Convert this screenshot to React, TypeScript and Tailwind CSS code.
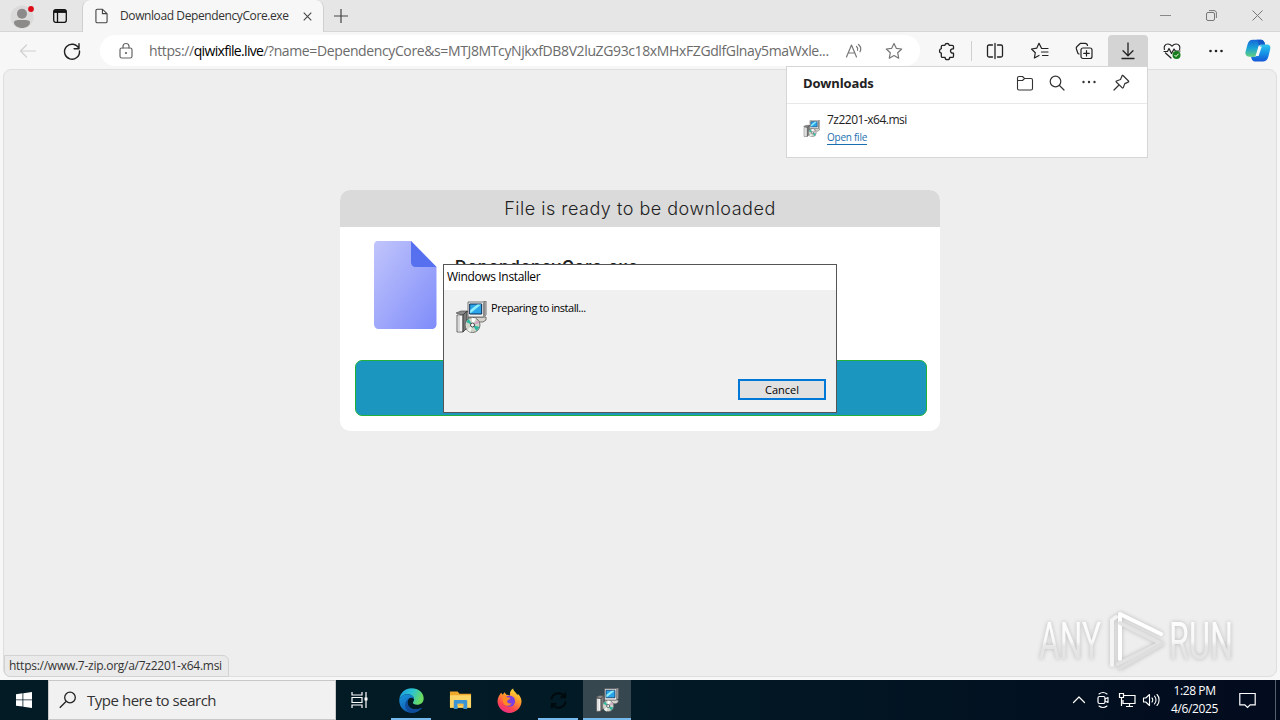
import type { ReactNode } from 'react';
import clsx from 'clsx';

type IconProps = { className?: string };

function Line({ className, children, size = 20 }: { className?: string; children: ReactNode; size?: number }) {
  return (
    <svg
      viewBox={`0 0 ${size} ${size}`}
      width={size}
      height={size}
      fill="none"
      stroke="currentColor"
      strokeWidth="1.2"
      strokeLinecap="round"
      strokeLinejoin="round"
      className={clsx('shrink-0', className)}
    >
      {children}
    </svg>
  );
}

const STAR = 'M10 2.4l2.3 4.9 5.4.7-4 3.8 1 5.4-4.7-2.7-4.7 2.7 1-5.4-4-3.8 5.4-.7z';

/* Windows Installer package: box, monitor and disc */
function InstallerIcon({ className }: IconProps) {
  return (
    <svg viewBox="0 0 32 32" className={clsx('shrink-0', className)}>
      <path d="M1 12l5-2h7l-3 4H7z" fill="#8a8a8a" stroke="#444" strokeWidth=".6" />
      <path d="M2 14h6v17H2z" fill="#f4f4f4" stroke="#444" strokeWidth=".8" />
      <path d="M4 14v17" stroke="#c4c4c4" strokeWidth="1.2" />
      <path d="M8 14l4-4v17l-4 4z" fill="#7a7a7a" stroke="#333" strokeWidth=".8" />
      <path d="M13 16h18v3l-3 2H13z" fill="#d6d3ce" stroke="#555" strokeWidth=".8" />
      <path d="M13 1h15l3-1v14l-3 2H13z" fill="#f1f1f1" stroke="#555" strokeWidth=".8" />
      <path d="M28 1.5l2.5-1v13.5L28 16z" fill="#8c8c8c" />
      <path d="M14.7 3h12v10h-12z" fill="#2aa5ea" stroke="#0b2a52" />
      <path d="M15.2 12.5V9l7-5.5h4z" fill="#8eeefc" />
      <circle cx="17.500" cy="24" r="7.500" fill="#cfd3c8" stroke="#555" strokeWidth=".8" />
      <path d="M17.500 24l-6.500-3 2.700-3zM17.500 24l7 2-3 4z" fill="#2fb6a0" />
      <path d="M17.500 24l-1-7.200 4.500.6z" fill="#fff" />
      <path d="M17.500 24l-2 7.200-3.500-2.200z" fill="#eef5f0" />
      <path d="M17.500 24l5.300-5 1.800 3z" fill="#cda7c0" />
      <circle cx="17.500" cy="24" r="2" fill="#fff" stroke="#333" strokeWidth=".9" />
    </svg>
  );
}

function CopilotIcon() {
  return (
    <svg viewBox="0 0 26 24" width="26" height="24">
      <defs>
        <linearGradient id="cpA" x1="0" y1="0" x2="0" y2="1">
          <stop offset="0" stopColor="#1767d8" />
          <stop offset=".5" stopColor="#19a4d8" />
          <stop offset="1" stopColor="#64cf7c" />
        </linearGradient>
        <linearGradient id="cpB" x1="0" y1="0" x2="0" y2="1">
          <stop offset="0" stopColor="#2ec7ee" />
          <stop offset=".5" stopColor="#1593e6" />
          <stop offset="1" stopColor="#1557d6" />
        </linearGradient>
      </defs>
      <path d="M17 5.500h5c3 0 3.900 2.200 3.100 5l-1.700 7c-.8 2.700-2.200 5-4.900 5H10c-2 0-3.500-1.500-4-5h4c1.500 0 2-.8 2.500-2.300l2-7c.5-1.700 1-2.700 2.500-2.700z" fill="url(#cpB)" />
      <path d="M9.500 17.700h-5c-3 0-4.800-2.200-3.900-5.100l1.900-7C3.300 2.800 5 .8 7.700.8H16c2 0 3.500 1.500 4 4.700h-4c-1.700 0-2.300 1-2.800 2.600l-2 7c-.4 1.500-.7 2.600-1.700 2.600z" fill="url(#cpA)" />
      <path d="M11.500.8H16c2 0 3.500 1.500 4 4.700h-3.500c-1.500 0-2 .6-2.600 1.600C13.500 4 13 1.500 11.500.8z" fill="#1559c9" />
      <path d="M14.200 7.500h2.600l-3.200 9.500H11z" fill="#f7f7f7" />
    </svg>
  );
}

function EdgeIcon() {
  return (
    <svg viewBox="0 0 24 24" width="25" height="25">
      <defs>
        <linearGradient id="egA" x1="0" y1="0" x2="1" y2=".3">
          <stop offset="0" stopColor="#1a9be0" />
          <stop offset=".55" stopColor="#2bc3d2" />
          <stop offset="1" stopColor="#6bdb60" />
        </linearGradient>
        <linearGradient id="egB" x1="0" y1="0" x2=".6" y2="1">
          <stop offset="0" stopColor="#1a94dc" />
          <stop offset="1" stopColor="#0d58ac" />
        </linearGradient>
      </defs>
      <path d="M.3 11C1 4.500 6 .3 12 .3c7 0 11.700 4.700 11.700 9.700 0 4-3 6-6.200 6-2.800 0-4.200-.9-4.200-1.800 0-.7 1.200-1.300 1.200-3.400 0-2.500-2.700-4.700-6.200-4.700C4.500 6.100 1.500 8 .3 11z" fill="url(#egA)" />
      <path d="M.3 11c1.200-3 4.200-4.900 8-4.900 3.500 0 6.200 2.200 6.200 4.700-.5-1-1.500-1.500-2.700-1.500-2.200 0-3.700 1.900-3.700 4.500 0 4 3.600 6.700 7.900 6.700 2.500 0 4.500-.7 6-1.500C20 22 16.300 23.800 12 23.800 5.300 23.800-.3 18.400.3 11z" fill="url(#egB)" />
      <path d="M8.100 13.800c0 4 3.600 6.700 7.900 6.700 2.500 0 4.500-.7 6-1.500-2 3-5.700 4.800-10 4.800-4-.6-6.500-4.500-6-8.300.3-2.700 2.300-5.300 5-6.100-1.900.6-2.900 2.300-2.900 4.400z" fill="#0f4c9c" />
    </svg>
  );
}

function FirefoxIcon() {
  return (
    <svg viewBox="0 0 24 24" width="25" height="25">
      <defs>
        <linearGradient id="ffA" x1=".8" y1="0" x2=".3" y2="1">
          <stop offset="0" stopColor="#ffe83e" />
          <stop offset=".4" stopColor="#ff9a2a" />
          <stop offset=".75" stopColor="#ff4550" />
          <stop offset="1" stopColor="#e62a8b" />
        </linearGradient>
      </defs>
      <path d="M4 4.500l1.500 2L7.200 4l1.800 2.500c1 0 2.500.2 3.500.8C12 4.500 13 2 15.500.5c.2 2 1.500 3 3 4.500l1 2 .5-1.500c2.500 2.500 3.700 5 3.500 8C23 19.500 18 24 12 24S.5 19 .5 12.800C.5 9.500 2 6.800 4 4.500z" fill="url(#ffA)" />
      <circle cx="12" cy="12.700" r="5.400" fill="#7b3fe0" />
      <path d="M6 9c2-1.500 4 .3 6 .2 1 0 1 1.300-.5 1.800-1.200.4-1.700 1-1.700 2 0 1.700 2.500 2.300 4.200 1.300-.8 2.700-3.800 3.500-6 2.200C5.500 15 5 11.500 6 9z" fill="#ff8a22" />
    </svg>
  );
}

function ExplorerIcon() {
  return (
    <svg viewBox="0 0 24 20" width="23" height="20">
      <path d="M1 1h8l2 2.500h12V18H1z" fill="#f0a92b" />
      <path d="M1 5h22v13H1z" fill="#fdd668" />
      <path d="M5 19.500v-8.200c0-.8.500-1.300 1.300-1.300h11.400c.8 0 1.300.5 1.300 1.300v8.200h-4V14H9v5.500z" fill="#3a94d6" />
      <path d="M9 14h6v2H9z" fill="#f3bb45" />
    </svg>
  );
}

function ToolButton({ children, active, className }: { children: ReactNode; active?: boolean; className?: string }) {
  return (
    <button className={clsx('flex h-[31px] w-10 shrink-0 items-center justify-center rounded-t', active && 'bg-[#d4d4d4]', className)}>
      {children}
    </button>
  );
}

function TitleBar() {
  return (
    <div className="flex h-8 border-b border-[#d6d6d6] bg-[#e6e6e6] pl-[9px]">
      <div className="flex w-[73px] items-center gap-4">
        <svg viewBox="0 0 28 28" width="28" height="28">
          <circle cx="13" cy="15" r="11.500" fill="#dadada" />
          <circle cx="13" cy="11.700" r="5" fill="#8d8b89" />
          <path d="M5 20.500c0-2 2-2.500 8-2.500s8 .5 8 2.500c0 3-4 5.500-8 5.500s-8-2.500-8-5.500z" fill="#8d8b89" />
          <circle cx="22" cy="7" r="2.900" fill="#dc0c18" />
        </svg>
        <svg viewBox="0 0 14 14" width="14" height="14" fill="none" stroke="#111" strokeWidth="1.300">
          <rect x=".7" y=".7" width="12.600" height="12.600" rx="2" />
          <path d="M1 2.500h12" strokeWidth="2.800" />
          <path d="M4.500 3v10" />
        </svg>
      </div>
      <div className="flex h-8 w-[242px] items-center rounded-t-lg border-x border-[#cfcfcf] bg-[#f7f7f7] pl-3">
        <svg viewBox="0 0 14 16" width="13" height="16" fill="none" stroke="#444" strokeWidth="1.200">
          <path d="M2.500.7H8L13 5.500v8.300c0 1-.6 1.500-1.500 1.500h-9c-.9 0-1.500-.5-1.500-1.500V2.200C1 1.200 1.600.7 2.500.7zM8 .8v4.700h4.800" />
        </svg>
        <span className="ml-3 w-[183px] text-[12px] tracking-[-0.4px] whitespace-nowrap text-[#333]">Download DependencyCore.exe</span>
        <svg viewBox="0 0 10 10" width="9" height="9" stroke="#444" strokeWidth="1.200">
          <path d="M.8.8l8.400 8.400M9.200.8L.8 9.200" />
        </svg>
      </div>
      <div className="flex w-[33px] items-center justify-center">
        <svg viewBox="0 0 14 14" width="14" height="14" stroke="#444" strokeWidth="1.200">
          <path d="M7 0v14M0 7h14" />
        </svg>
      </div>
      <div className="ml-auto flex items-center text-[#777]">
        <div className="flex w-[46px] justify-center">
          <div className="h-px w-[11px] bg-[#888]" />
        </div>
        <div className="flex w-[46px] justify-center">
          <svg viewBox="0 0 11 11" width="11" height="11" fill="none" stroke="currentColor">
            <rect x=".5" y="2.500" width="8" height="8" rx="1.500" />
            <path d="M3 .6h5c1.500 0 2.400 1 2.400 2.400v5" />
          </svg>
        </div>
        <div className="flex w-[46px] justify-center">
          <svg viewBox="0 0 11 11" width="11" height="11" fill="none" stroke="currentColor">
            <path d="M.5.5l10 10M10.500.5l-10 10" />
          </svg>
        </div>
      </div>
    </div>
  );
}

function Toolbar() {
  return (
    <div className="flex h-[37px] items-center bg-[#f7f7f7] pl-2 text-[#222]">
      <ToolButton>
        <Line className="text-[#d0d0d0]">
          <path d="M2.500 10h15M8.500 4l-6 6 6 6" />
        </Line>
      </ToolButton>
      <ToolButton className="ml-1">
        <Line>
          <path d="M16.800 7.500A7.500 7.500 0 1 0 17.500 10M17 2.800v4.900h-4.900" strokeWidth="1.400" />
        </Line>
      </ToolButton>
      <div className="ml-2 flex h-[31px] w-[820px] items-center rounded-full bg-white pr-4 pl-4 text-[#666]">
        <Line>
          <rect x="4" y="7" width="12" height="10" rx="1.800" />
          <path d="M7 7V5.500a3 3 0 0 1 6 0V7" />
          <circle cx="10" cy="12" r=".5" fill="currentColor" />
        </Line>
        <span className="ml-[13px] w-[685px] text-[14px] tracking-[-0.38px] whitespace-nowrap text-[#6b6b6b]">
          https://<span className="tracking-[-0.68px] text-black">qiwixfile.live</span>
          /?name=DependencyCore&amp;s=MTJ8MTcyNjkxfDB8V2luZG93c18xMHxFZGdlfGlnay5maWxle...
        </span>
        <div className="ml-auto flex gap-5 text-[#777]">
          <Line>
            <path d="M2.500 16L7.500 4l5 12M4.200 12h6.600" />
            <path d="M12.500 5.500c1.200 1 1.500 2.500 1 3.800M14.500 3.500c2.200 1.800 2.600 5 1.500 7.300" />
          </Line>
          <Line>
            <path d={STAR} />
          </Line>
        </div>
      </div>
      <ToolButton className="ml-[7px]">
        <Line>
          <path
            d="M5.500 4.300h2.300a2.300 2.300 0 0 1 4.500 0h3c.8 0 1.200.5 1.200 1.200v2.300h-.8a2.200 2.200 0 0 0 0 4.400h.8v3c0 .8-.4 1.200-1.200 1.200h-2.600a2.300 2.300 0 0 1-4.600 0H5.500c-.8 0-1.200-.4-1.200-1.200v-3a2.300 2.300 0 0 1 0-4.500V5.500c0-.7.400-1.200 1.200-1.200z"
            strokeWidth="1.300"
          />
        </Line>
      </ToolButton>
      <div className="ml-1 h-5 w-px bg-[#d0d0d0]" />
      <ToolButton className="ml-[3px]">
        <Line>
          <path d="M10 2.500v15M7.500 4H4C3 4 2.500 4.600 2.500 5.500v9c0 .9.500 1.500 1.500 1.500h3.500M12.500 4H16c1 0 1.500.6 1.500 1.500v9c0 .9-.5 1.500-1.500 1.500h-3.500" strokeWidth="1.300" />
        </Line>
      </ToolButton>
      <ToolButton className="ml-[5px]">
        <Line>
          <path d="M11.500 7.300L9 2.300 6.700 7.200l-5.200.8 3.800 3.700-.9 5.300L9 14.500M12.200 7.500h5.800M11.500 11h6.500M12.500 14.500H18" />
        </Line>
      </ToolButton>
      <ToolButton className="ml-1">
        <Line>
          <rect x="7" y="7" width="11" height="10.500" rx="2" />
          <path d="M12.500 9.500v5.500M9.700 12.300h5.600M13.500 4.500C13.300 3 12.500 2.300 11.300 2.300H6.500L3 5.500c-1 1-1 1.600-.6 2.500L4 12.500l1 .5" />
        </Line>
      </ToolButton>
      <ToolButton className="ml-1" active>
        <Line>
          <path d="M10 2v12.500M5 9.700l5 5 5-5M4 17.500h12" strokeWidth="1.300" />
        </Line>
      </ToolButton>
      <ToolButton className="ml-1">
        <Line>
          <path d="M2.400 8.500C1.400 5.500 3.300 3 5.800 3 8 3 9 4 10 5.200 11 4 12 3 14.200 3c2.600 0 4.500 2.500 3.400 5.500M3.500 12l5.500 5" />
          <path d="M2 10.500h3.500l1.500-3 2.500 5L12 8l1.500 2H18" />
          <circle cx="14.500" cy="14" r="4" fill="#187d1b" stroke="none" />
          <path d="M12.800 14.300l1.200 1.200 2.300-2.500" stroke="#fff" strokeWidth="1" />
        </Line>
      </ToolButton>
      <ToolButton className="ml-1">
        <Line>
          <g fill="currentColor" stroke="none">
            <circle cx="4.500" cy="10" r="1.300" />
            <circle cx="10" cy="10" r="1.300" />
            <circle cx="15.500" cy="10" r="1.300" />
          </g>
        </Line>
      </ToolButton>
      <ToolButton className="ml-0.5">
        <CopilotIcon />
      </ToolButton>
    </div>
  );
}

function DownloadsPopover() {
  return (
    <div className="absolute top-[66px] left-[786px] h-[92px] w-[362px] border border-[#d6d6d6] bg-white">
      <div className="flex h-[37px] items-center border-b border-[#e8e8e8] pr-[17px] pl-4">
        <h2 className="mt-[-3px] text-[13px] font-bold tracking-[-0.15px] text-[#222]">Downloads</h2>
        <div className="mt-[-5px] ml-auto flex gap-[14px] text-[#333]">
          <Line size={18}>
            <path d="M1.500 5.500V4c0-.9.500-1.500 1.500-1.500h3.500L8.500 4.500H15c1 0 1.500.6 1.500 1.500v8.500c0 .9-.5 1.500-1.500 1.500H3c-1 0-1.500-.6-1.500-1.500zM1.500 6.500h5l2-2" strokeWidth="1.100" />
          </Line>
          <Line size={18}>
            <circle cx="7.500" cy="7.500" r="5.300" />
            <path d="M11.500 11.500l4.500 4.500" />
          </Line>
          <Line size={18}>
            <g fill="currentColor" stroke="none">
              <circle cx="3.500" cy="8" r="1.200" />
              <circle cx="9" cy="8" r="1.200" />
              <circle cx="14.500" cy="8" r="1.200" />
            </g>
          </Line>
          <Line size={18}>
            <path d="M11 1.500L16.500 7c.4.400.2.900-.3 1.100l-3.400 1.500-1.500 4c-.2.500-.6.600-1 .2L4.300 8c-.4-.4-.3-.8.200-1l4-1.500L10 1.900c.2-.5.600-.8 1-.4zM7 11l-5 5" strokeWidth="1.200" />
          </Line>
        </div>
      </div>
      <div className="flex items-start pt-[7px] pl-4">
        <InstallerIcon className="mt-[9px] size-[17px]" />
        <div className="ml-[7px] flex flex-col items-start">
          <span className="text-[12px] leading-[18px] tracking-[-0.5px] text-[#222]">7z2201-x64.msi</span>
          <a className="mt-px border-b border-[#1a6fb0] text-[10px] leading-[14px] tracking-[-0.25px] text-[#1a6fb0]">Open file</a>
        </div>
      </div>
    </div>
  );
}

function DownloadCard() {
  return (
    <section className="h-[241px] w-[600px] overflow-hidden rounded-[10px] bg-white">
      <h1 className="flex h-[37px] items-center justify-center bg-[#dadada] font-[Inter] text-[18px] font-light tracking-[0.5px] text-[#222]">
        File is ready to be downloaded
      </h1>
      <div className="flex h-[133px] pt-[14px] pl-[33px]">
        <svg viewBox="0 0 64 88" width="64" height="88">
          <defs>
            <linearGradient id="doc" x1="0" y1="0" x2="1" y2="1">
              <stop offset="0" stopColor="#c1c5fb" />
              <stop offset="1" stopColor="#7f8cfa" />
            </linearGradient>
          </defs>
          <path d="M5 0h33l25.500 26v57c0 3-2 5-5 5H6c-3 0-5-2-5-5V5c0-3 1-5 4-5z" fill="url(#doc)" />
          <path d="M38 0l25.500 26H43c-3 0-5-2-5-5z" fill="#5670f0" />
        </svg>
        <p className="mt-[12px] ml-[18px] font-[Inter] text-[16px] leading-[26px] font-semibold tracking-[0.9px] text-[#222]">DependencyCore.exe</p>
      </div>
      <div className="ml-[15px] h-[56px] w-[572px] rounded-[7px] border border-[#23b13b] bg-[#1b96bf]" />
    </section>
  );
}

function InstallerDialog() {
  return (
    <div role="dialog" className="absolute top-[264px] left-[443px] flex h-[149px] w-[394px] flex-col border border-[#555] bg-[#f0f0f0] text-black">
      <div className="flex h-[25px] items-center bg-white pb-px pl-[3px] text-[12px] tracking-[-0.35px]">Windows Installer</div>
      <div className="flex pt-[10px] pl-[11px]">
        <InstallerIcon className="mt-px size-8" />
        <p className="ml-1 text-[11px] leading-[16px] tracking-[-0.47px]">Preparing to install...</p>
      </div>
      <button className="mt-auto mr-[10px] mb-3 flex h-[21px] w-[88px] items-center justify-center self-end border-2 border-[#0078d7] bg-[#e1e1e1] pt-0.5 text-[11px]">
        Cancel
      </button>
    </div>
  );
}

function Watermark() {
  return (
    <svg viewBox="0 0 210 72" width="210" height="72" className="absolute top-[608px] left-[1036px] drop-shadow-[0_0_2px_rgba(0,0,0,0.22)]">
      <defs>
        <linearGradient id="wm" x1="0" y1="0" x2="0" y2="1">
          <stop offset="0" stopColor="#fff" />
          <stop offset=".5" stopColor="#f8f8f8" />
          <stop offset=".58" stopColor="#e6e6e6" />
          <stop offset="1" stopColor="#e0e0e0" />
        </linearGradient>
      </defs>
      <g fill="url(#wm)" fontFamily="Roboto, sans-serif" fontSize="51" fontWeight="400">
        <text x="3" y="51" textLength="62" lengthAdjust="spacingAndGlyphs">ANY</text>
        <text x="133" y="51" textLength="64" lengthAdjust="spacingAndGlyphs">RUN</text>
      </g>
      <g fill="none" strokeLinecap="round" strokeLinejoin="round" strokeWidth="4">
        <path d="M76 57V12l4-3" stroke="#f4f4f4" />
        <path d="M84 51V6l41 20" stroke="#fff" />
        <path d="M84 15l40 20-42 21" stroke="#e3e3e3" />
        <path d="M84 60l42-24" stroke="#dedede" />
      </g>
    </svg>
  );
}

function TaskButton({ children, running, active }: { children: ReactNode; running?: boolean; active?: boolean }) {
  return (
    <button className={clsx('flex h-10 w-12 flex-col items-center', active && 'bg-[#37474f]')}>
      <span className="flex h-[38px] items-center pt-0.5">{children}</span>
      {(running || active) && <span className={clsx('h-0.5 bg-[#76b9ed]', active ? 'w-12' : 'w-10')} />}
    </button>
  );
}

function Taskbar() {
  return (
    <footer className="flex h-10 bg-linear-to-r from-[#021b24] via-[#021a25] to-[#020b1e] text-white">
      <button className="flex w-12 items-center justify-center">
        <svg viewBox="0 0 16 16" width="16" height="16" fill="#fff">
          <path d="M0 2.200l6.500-.9v6.200H0zM7.300 1.200L16 0v7.500H7.300zM0 8.300h6.500v6.300L0 13.700zM7.300 8.300H16V16l-8.700-1.200z" />
        </svg>
      </button>
      <div className="flex w-72 items-center border border-[#c8c8c8] bg-[#f1f1f1] pl-[10px]">
        <svg viewBox="0 0 18 18" width="18" height="18" fill="none" stroke="#222" strokeWidth="1.300">
          <circle cx="11" cy="6.500" r="5.300" />
          <path d="M7 10.500L.8 16.700" />
        </svg>
        <span className="ml-[10px] text-[15px] tracking-[-0.47px] text-[#333]">Type here to search</span>
      </div>
      <div className="flex w-[51px] items-center pl-[15px]">
        <svg viewBox="0 0 18 18" width="18" height="18" fill="none" stroke="#fff" strokeWidth="1.200">
          <path d="M1 1v3h10V1M1 17v-3h10v3M1 6.500h10v5H1zM15 1v16" />
          <path d="M13.500 6.500h3v3h-3z" fill="#fff" stroke="none" />
        </svg>
      </div>
      <div className="flex gap-px">
        <TaskButton running>
          <EdgeIcon />
        </TaskButton>
        <TaskButton>
          <ExplorerIcon />
        </TaskButton>
        <TaskButton>
          <FirefoxIcon />
        </TaskButton>
        <TaskButton running>
          <svg viewBox="0 0 20 20" width="19" height="19" fill="none" stroke="#000a0e" strokeWidth="2">
            <path d="M2.500 9a7.500 7.500 0 0 1 13.500-3.500M17.500 11A7.500 7.500 0 0 1 4 14.500M17 1.500v5h-5M3 18.500v-5h5" />
          </svg>
        </TaskButton>
        <TaskButton active>
          <InstallerIcon className="size-6" />
        </TaskButton>
      </div>
      <div className="ml-auto flex items-center">
        <div className="flex gap-1.5">
          <Line size={18}>
            <path d="M3.500 11.500L9 6l5.500 5.500" />
          </Line>
          <Line size={18}>
            <rect x="4" y="5.500" width="7" height="7" rx="1.500" />
            <path d="M11 8l3-1.500v5L11 10M5 3c2.500-1.800 5.500-1.800 8 0M5 15c2.500 1.800 5.500 1.800 8 0" strokeWidth="1.100" />
          </Line>
          <Line size={18}>
            <path d="M6 4.500h11v8H5V9M8 15.500h7M11.500 12.500v3M1.500 2.500h4v4h-4zM3.500 6.500V15" strokeLinecap="butt" strokeLinejoin="miter" />
          </Line>
          <Line size={18}>
            <path d="M1.500 7v4h2.300L7.500 14.500v-11L3.800 7zM10 7c1 1 1 3 0 4M12.500 5.200c2 2 2 5.600 0 7.600M15 3.500c2.800 2.800 2.800 8.200 0 11" strokeWidth="1.100" />
          </Line>
        </div>
        <div className="ml-[5px] w-[59px] text-center text-[12px] leading-[18px] tracking-[-0.4px] whitespace-nowrap">
          <div>1:28 PM</div>
          <div>4/6/2025</div>
        </div>
        <div className="ml-[15px] flex w-[41px] items-center">
          <svg viewBox="0 0 17 17" width="17" height="17" fill="none" stroke="#fff" strokeWidth="1.200">
            <path d="M.8 1.500h15.400v11.300h-5L8.500 15.500l-2.700-2.700h-5z" />
          </svg>
          <div className="ml-[19px] h-10 w-px bg-[#55606c]" />
        </div>
      </div>
    </footer>
  );
}

export default function App() {
  return (
    <div className="relative flex h-[720px] w-[1280px] flex-col overflow-hidden bg-[#f7f7f7] font-['Open_Sans','Noto_Sans',sans-serif]">
      <TitleBar />
      <Toolbar />
      <main className="mx-[3px] mb-[3px] flex flex-1 justify-center rounded-lg border border-[#dedede] bg-[#eeeeee] pt-[120px]">
        <DownloadCard />
      </main>
      <div className="absolute top-[655px] left-1 flex h-[22px] w-[225px] items-center rounded-tr-md rounded-bl-md border border-[#d2d2d2] bg-[#eaeaea] pl-1 text-[12px] tracking-[-0.26px] whitespace-nowrap text-[#333]">
        https://www.7-zip.org/a/7z2201-x64.msi
      </div>
      <Watermark />
      <DownloadsPopover />
      <InstallerDialog />
      <Taskbar />
    </div>
  );
}
